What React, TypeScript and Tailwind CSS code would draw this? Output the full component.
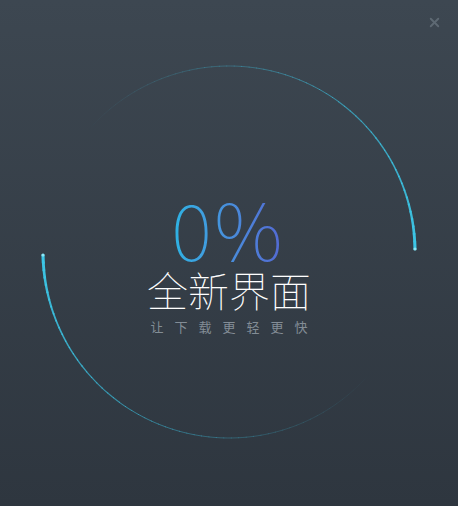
import { X } from "lucide-react";

const CX = 229;
const CY = 252;
const R = 186;

type Seg = { d: string; width: number; opacity: number };

/** Build a comet-like arc: bright thick head fading into a thin tail. */
function comet(headDeg: number, spanDeg: number, steps = 60): Seg[] {
  const segs: Seg[] = [];
  const pt = (deg: number) => {
    const a = (deg * Math.PI) / 180;
    return [CX + R * Math.cos(a), CY - R * Math.sin(a)];
  };
  for (let i = 0; i < steps; i++) {
    const t0 = i / steps;
    const t1 = (i + 1) / steps;
    const [x0, y0] = pt(headDeg + spanDeg * t0);
    const [x1, y1] = pt(headDeg + spanDeg * t1);
    const k = 1 - t0;
    segs.push({
      d: `M${x0.toFixed(2)} ${y0.toFixed(2)} A${R} ${R} 0 0 0 ${x1.toFixed(2)} ${y1.toFixed(2)}`,
      width: 0.9 + 2.2 * Math.pow(k, 6),
      opacity: Math.pow(k, 1.1),
    });
  }
  return segs;
}

const arcs = [...comet(1, 138), ...comet(181, 138)];

export default function App() {
  return (
    <div className="relative w-[458px] h-[506px] overflow-hidden bg-gradient-to-b from-[#3d4751] to-[#2e363f] font-['Noto_Sans_CJK_SC','Noto_Sans',sans-serif]">
      <svg className="absolute inset-0" width="458" height="506" viewBox="0 0 458 506" fill="none">
        {arcs.map((s, i) => (
          <path
            key={i}
            d={s.d}
            stroke="#3cc6e6"
            strokeWidth={s.width}
            strokeOpacity={s.opacity}
            strokeLinecap="round"
          />
        ))}
        <circle cx={CX + R} cy={CY - 3} r="1.6" fill="#8ee8f6" />
        <circle cx={CX - R} cy={CY + 3} r="1.6" fill="#8ee8f6" />
      </svg>

      <button type="button" className="absolute right-[16px] top-[15px] text-[#5e6973]">
        <X className="h-[15px] w-[15px]" strokeWidth={3} />
      </button>

      <div className="relative flex flex-col items-center pt-[188px]">
        <div className="text-[78px] leading-none font-thin tracking-[2px] pr-[2px] bg-gradient-to-r from-[#2bb4e4] to-[#5366d2] bg-clip-text text-transparent">
          0%
        </div>
        <div className="mt-[3px] text-[41px] leading-none font-thin text-white">全新界面</div>
        <div className="mt-[10px] pl-[11px] text-[13px] leading-none tracking-[11px] text-[#838d96]">让下载更轻更快</div>
      </div>
    </div>
  );
}
